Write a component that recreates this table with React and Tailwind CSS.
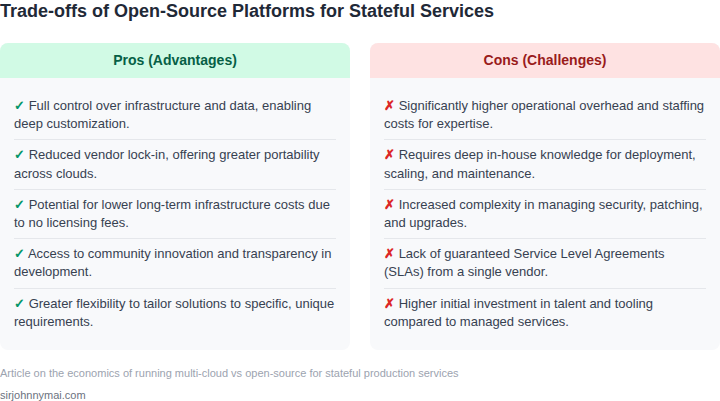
const pros = [
  "Full control over infrastructure and data, enabling deep customization.",
  "Reduced vendor lock-in, offering greater portability across clouds.",
  "Potential for lower long-term infrastructure costs due to no licensing fees.",
  "Access to community innovation and transparency in development.",
  "Greater flexibility to tailor solutions to specific, unique requirements.",
];

const cons = [
  "Significantly higher operational overhead and staffing costs for expertise.",
  "Requires deep in-house knowledge for deployment, scaling, and maintenance.",
  "Increased complexity in managing security, patching, and upgrades.",
  "Lack of guaranteed Service Level Agreements (SLAs) from a single vendor.",
  "Higher initial investment in talent and tooling compared to managed services.",
];

function Card({ title, items, good }) {
  return (
    <div className="flex-1 rounded-lg bg-[#f8f9fb] overflow-hidden">
      <div
        className={`h-[35px] flex items-center justify-center text-[14px] font-bold ${
          good ? "bg-[#d1fae5] text-[#065f46]" : "bg-[#fee2e2] text-[#991b1b]"
        }`}
      >
        {title}
      </div>
      <ul className="px-[14px] pt-[13px] pb-[13px]">
        {items.map((t, i) => (
          <li
            key={i}
            className={`py-[6px] text-[13px] leading-[18.2px] text-[#374151] ${
              i > 0 ? "border-t border-[#e5e7eb]" : ""
            }`}
          >
            <span className={`font-bold ${good ? "text-[#059669]" : "text-[#dc2626]"}`}>
              {good ? "✓" : "✗"}
            </span>{" "}
            {t}
          </li>
        ))}
      </ul>
    </div>
  );
}

export default function App() {
  return (
    <div className="w-[720px] h-[401px] bg-white font-['Liberation_Sans',Arial,sans-serif] overflow-hidden">
      <h1 className="text-[18px] leading-[22px] font-bold text-[#1f2937]">
        Trade-offs of Open-Source Platforms for Stateful Services
      </h1>
      <div className="flex gap-[20px] mt-[21px]">
        <Card title="Pros (Advantages)" items={pros} good />
        <Card title="Cons (Challenges)" items={cons} />
      </div>
      <p className="mt-[16px] text-[11px] leading-[14px] text-[#9ca3af]">
        Article on the economics of running multi-cloud vs open-source for stateful production services
      </p>
      <p className="mt-[8px] text-[11px] leading-[14px] text-[#6b7280]">sirjohnnymai.com</p>
    </div>
  );
}
